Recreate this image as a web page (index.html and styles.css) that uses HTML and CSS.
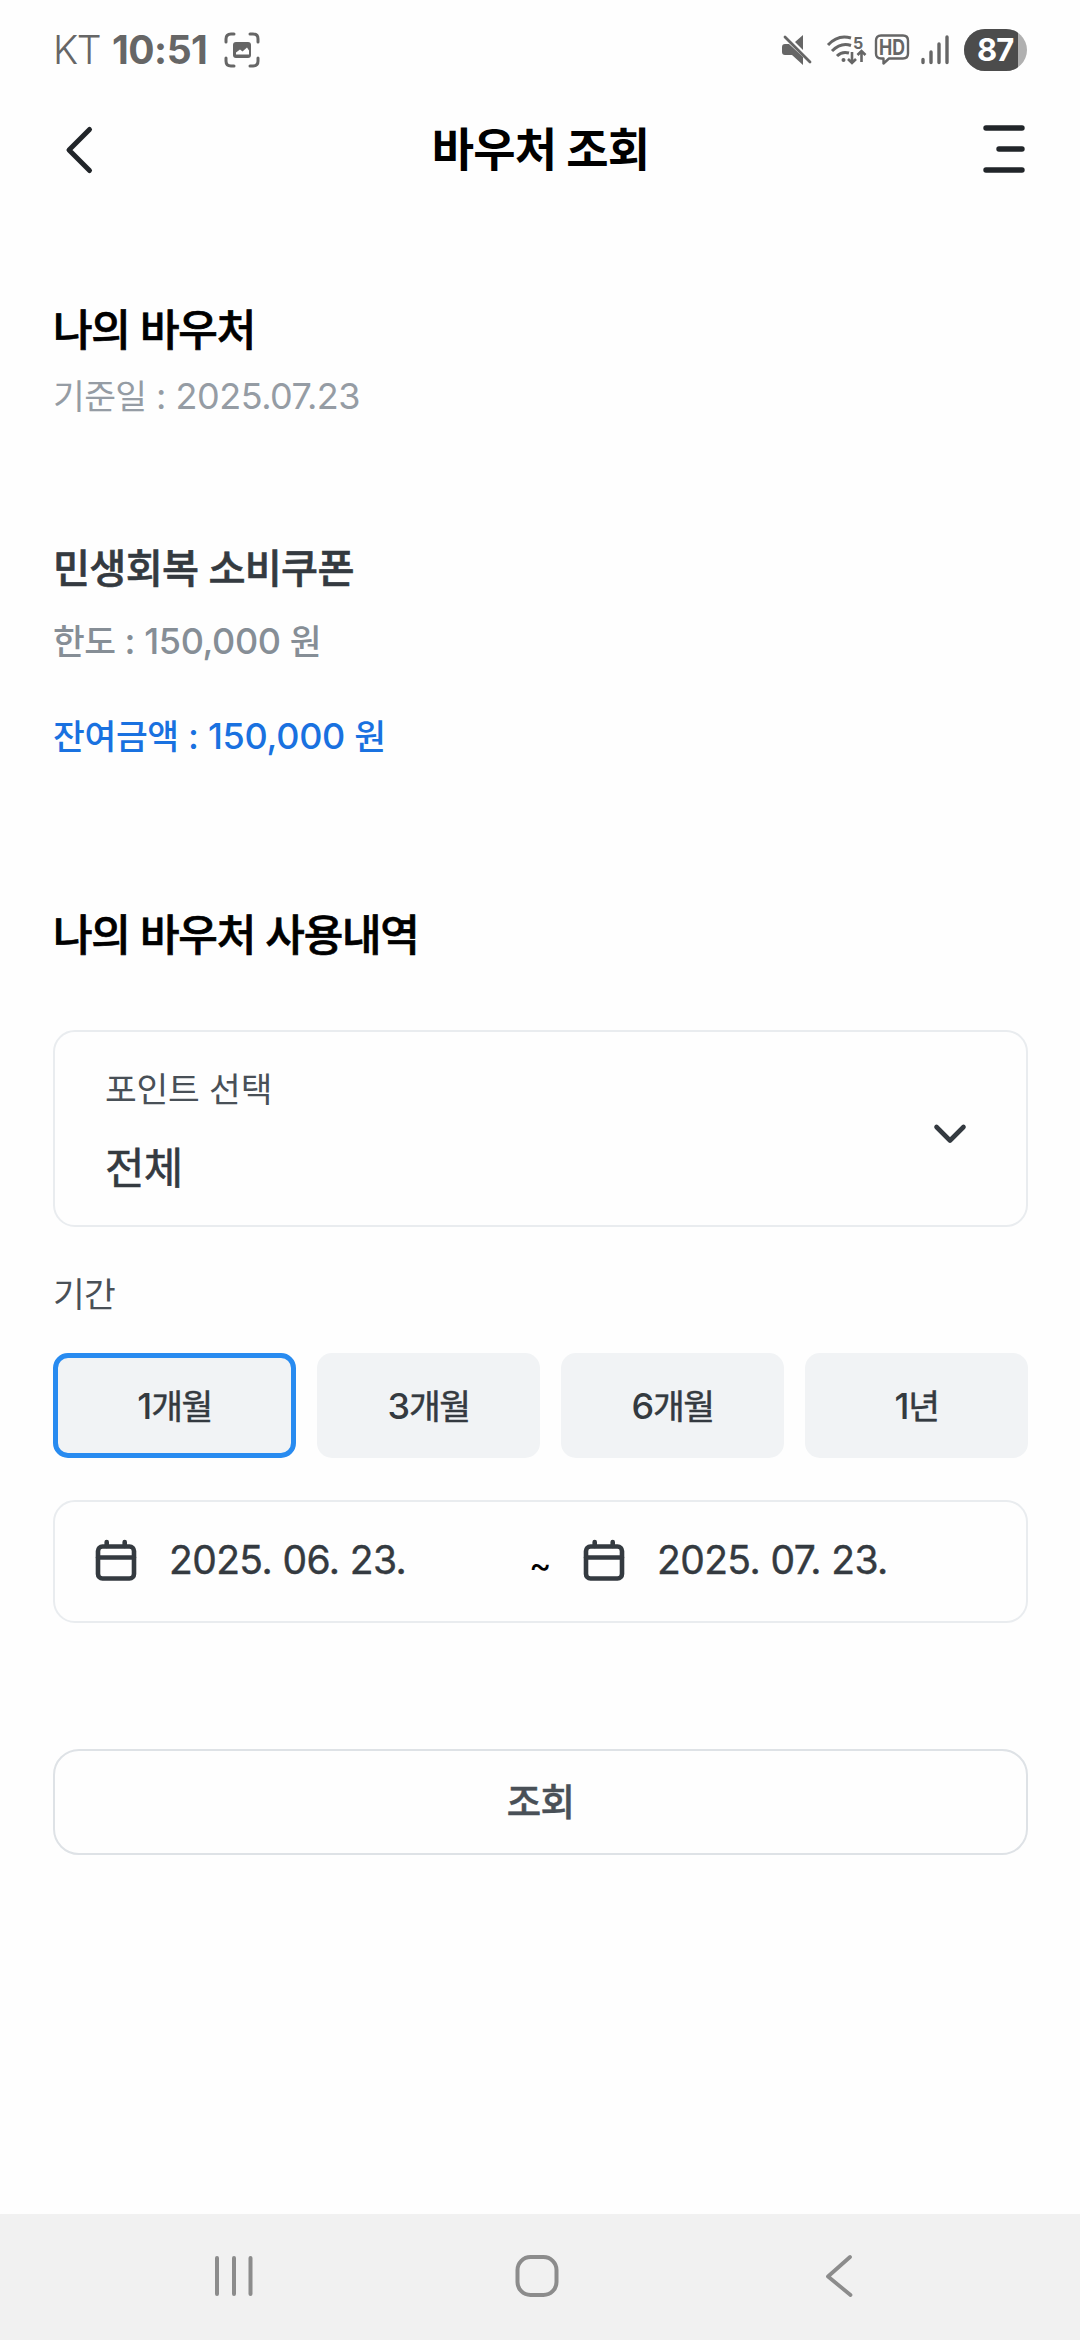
FILE: index.html
```html
<!DOCTYPE html>
<html lang="ko">
<head>
<meta charset="utf-8">
<title>바우처 조회</title>
<link rel="stylesheet" href="styles.css">
</head>
<body>
<div class="status">
  <span class="carrier">KT</span>
  <span class="clock">10:51</span>
  <svg class="capture" width="36" height="36" viewBox="0 0 36 36" fill="none" stroke="#666" stroke-width="3" stroke-linecap="round"><path d="M2 10V7q0-5 5-5h3M26 2h3q5 0 5 5v3M34 26v3q0 5-5 5h-3M10 34H7q-5 0-5-5v-3"/><rect x="9" y="10" width="18" height="16" rx="3" fill="#666" stroke="none"/><path d="M12 22.500v-2l4-3 2.500 2 4.500-4 2 3v4z" fill="#fff" stroke="none"/></svg>
  <div class="status-icons">
    <svg class="mute" width="30" height="32" viewBox="0 0 30 32"><path fill="#666" d="M0 13q0-3 3-3h4l14 13v8L10 21H3q-3 0-3-3zM21 1v15l-8-8z"/><path d="M3 3l25 25" stroke="#666" stroke-width="2.800" stroke-linecap="round"/></svg>
    <svg class="wifi" width="40" height="32" viewBox="0 0 40 32" fill="none" stroke="#666" stroke-width="3"><path d="M1 11Q11 0 24 4M5 17Q14 8 24 11.500M10 22q5-5 12-3"/><circle cx="16.500" cy="26" r="2" fill="#666" stroke="none"/><path d="M25 18v11m-4-4 4 4 4-4M34.500 28V17m-4 4 4-4 4 4" stroke-width="2.600"/><text x="26" y="15" class="wifi-gen">5</text></svg>
    <svg class="hd" width="36" height="32" viewBox="0 0 36 32"><path d="M7 1.500h22q5 0 5 5v13q0 5-5 5H15l-5.500 5V24.500H7q-5 0-5-5v-13q0-5 5-5z" fill="none" stroke="#666" stroke-width="2.400" stroke-linejoin="round"/><text x="5" y="20.500" class="hd-label" textLength="26" lengthAdjust="spacingAndGlyphs">HD</text></svg>
    <svg class="signal" width="28" height="30" viewBox="0 0 28 30" stroke="#666" stroke-width="3.400" stroke-linecap="round"><path d="M2 24.500v3M10 17v10.500M18 9v18.500M26 2v25.500"/></svg>
    <div class="battery"><span class="battery-level">87</span></div>
  </div>
</div>

<header class="appbar">
  <svg width="28" height="50" viewBox="0 0 28 50" fill="none" stroke="#212529" stroke-width="5" stroke-linecap="round" stroke-linejoin="round"><path d="M25.500 4.500 5 25l20.500 20.500"/></svg>
  <h1 class="ko">바우처 조회</h1>
  <svg width="44" height="50" viewBox="0 0 44 50" stroke="#212529" stroke-width="5.400" stroke-linecap="round"><path d="M4 3h36M17 24h23M4 45h36"/></svg>
</header>

<main class="content">
  <section class="summary">
    <h2 class="ko">나의 바우처</h2>
    <p class="asof"><span class="ko">기준일</span> : 2025.07.23</p>
  </section>
  <section class="voucher">
    <h3 class="ko">민생회복 소비쿠폰</h3>
    <p class="limit"><span class="ko">한도</span> : 150,000 <span class="ko">원</span></p>
    <p class="balance"><span class="ko">잔여금액</span> : 150,000 <span class="ko">원</span></p>
  </section>
  <section class="history">
    <h2 class="ko">나의 바우처 사용내역</h2>
    <div class="select">
      <div>
        <p class="select-label ko">포인트 선택</p>
        <p class="select-value ko">전체</p>
      </div>
      <svg width="34" height="22" viewBox="0 0 34 22" fill="none" stroke="#343a40" stroke-width="4.600" stroke-linecap="round" stroke-linejoin="round"><path d="M3.500 4 17 17.500 30.500 4"/></svg>
    </div>
    <p class="field-label ko">기간</p>
    <div class="periods">
      <button class="period selected">1<span class="ko">개월</span></button>
      <button class="period">3<span class="ko">개월</span></button>
      <button class="period">6<span class="ko">개월</span></button>
      <button class="period">1<span class="ko">년</span></button>
    </div>
    <div class="range">
      <div class="date date-from">
        <svg width="42" height="42" viewBox="0 0 42 42" fill="none" stroke="#343a40" stroke-width="4.600" stroke-linecap="round"><rect x="3" y="7.500" width="36" height="32" rx="4.500"/><path d="M3 18.500h36M11.700 3v4M29.700 3v4"/></svg>
        <span>2025. 06. 23.</span>
      </div>
      <span class="tilde">~</span>
      <div class="date">
        <svg width="42" height="42" viewBox="0 0 42 42" fill="none" stroke="#343a40" stroke-width="4.600" stroke-linecap="round"><rect x="3" y="7.500" width="36" height="32" rx="4.500"/><path d="M3 18.500h36M11.700 3v4M29.700 3v4"/></svg>
        <span>2025. 07. 23.</span>
      </div>
    </div>
    <button class="submit"><span class="ko">조회</span></button>
  </section>
</main>

<nav class="navbar">
  <svg width="44" height="44" viewBox="0 0 44 44" stroke="#8c8c8c" stroke-width="4" stroke-linecap="round"><path d="M5 4v36M22 4v36M38.500 4v36"/></svg>
  <svg width="44" height="44" viewBox="0 0 44 44" fill="none" stroke="#8c8c8c" stroke-width="4"><rect x="2.500" y="3" width="39" height="38" rx="13"/></svg>
  <svg width="44" height="44" viewBox="0 0 44 44" fill="none" stroke="#8c8c8c" stroke-width="3.800" stroke-linecap="round" stroke-linejoin="round"><path d="M33 3 11 22.500l22.500 18.500"/></svg>
</nav>
</body>
</html>
```
FILE: styles.css
```css
* { box-sizing: border-box; margin: 0; padding: 0; }
body {
  width: 1080px;
  height: 2340px;
  display: flex;
  flex-direction: column;
  background: #fefefe;
  color: #343a40;
  font-family: "Inter", "Noto Sans CJK KR", sans-serif;
  font-size: 36px;
  line-height: 60px;
  overflow: hidden;
}
svg { display: block; flex: none; overflow: visible; }
button { font: inherit; color: inherit; border: 0; }
p { height: 60px; }
.ko { letter-spacing: -0.018em; }
span.ko { font-size: 0.96em; line-height: 1; }

.status {
  height: 100px;
  padding: 0 53px;
  display: flex;
  align-items: center;
  color: #666;
  font-size: 39px;
}
.carrier { width: 59px; font-weight: 300; letter-spacing: -1.5px; }
.clock { width: 112px; font-weight: 700; letter-spacing: -0.5px; }
.status-icons { margin-left: auto; display: flex; align-items: center; }
.wifi { margin-left: 15px; }
.wifi-gen { font-size: 16px; font-weight: 700; fill: #666; stroke: none; }
.hd { margin-left: 7px; }
.hd-label { font-size: 21px; font-weight: 700; fill: #666; }
.signal { margin-left: 11px; }
.battery {
  width: 63px;
  height: 42px;
  margin-left: 15px;
  border-radius: 21px;
  overflow: hidden;
  background: #b0b0b0;
}
.battery-level {
  display: block;
  width: 54px;
  padding-left: 13px;
  background: #4c4c4c;
  color: #fff;
  font-size: 31px;
  font-weight: 700;
  line-height: 42px;
  letter-spacing: -1px;
}

.appbar {
  height: 100px;
  padding: 0 54px 0 64px;
  display: flex;
  align-items: center;
  justify-content: space-between;
  color: #000;
}
.appbar h1 { font-size: 46px; font-weight: 700; margin-left: 7px; padding-bottom: 2px; }

.content { flex: 1; padding: 100px 52px 0 53px; }
h2 { font-size: 43px; font-weight: 500; color: #000; -webkit-text-stroke: 0.7px currentColor; }
h2.ko { letter-spacing: -0.028em; }
.asof { margin-top: 6px; color: #959ca4; letter-spacing: -0.5px; }
.voucher { margin-top: 113px; }
h3 { font-size: 40.3px; font-weight: 500; -webkit-text-stroke: 0.6px currentColor; }
.limit { margin-top: 12px; color: #868e96; font-weight: 500; letter-spacing: -0.4px; }
.balance { margin-top: 35px; color: #1971e0; font-weight: 500; letter-spacing: -0.3px; }
.balance .ko { letter-spacing: -0.01em; }
.history { margin-top: 139px; }
.select {
  height: 197px;
  margin-top: 65px;
  padding: 0 59px 0 50px;
  display: flex;
  align-items: center;
  justify-content: space-between;
  border: 2px solid #e9ecef;
  border-radius: 22px;
}
.select-label { font-size: 34.5px; color: #495057; }
.select-label.ko { letter-spacing: -0.006em; }
.select-value { margin-top: 18px; font-size: 43px; -webkit-text-stroke: 0.6px currentColor; }
.select svg { margin-top: 11px; }
.field-label { margin-top: 38px; font-size: 34.5px; color: #495057; }
.periods { margin-top: 28px; display: flex; gap: 21px; }
.period {
  flex: 1;
  height: 105px;
  border-radius: 15px;
  background: #f1f3f5;
  font-weight: 500;
  letter-spacing: -1px;
}
.period .ko { letter-spacing: -0.045em; font-weight: 400; -webkit-text-stroke: 0.5px currentColor; }
.period.selected { flex: 0 0 243px; border: 5px solid #288bf0; }
.range {
  height: 123px;
  margin-top: 42px;
  padding: 0 40px 3px;
  display: flex;
  align-items: center;
  border: 2px solid #e9ecef;
  border-radius: 22px;
  font-size: 39px;
  letter-spacing: -0.6px;
}
.date { display: flex; align-items: center; gap: 32px; -webkit-text-stroke: 0.4px currentColor; }
.date-from { width: 434px; }
.tilde { width: 54px; padding-top: 10px; font-size: 34px; color: #000; }
.submit {
  width: 100%;
  height: 106px;
  margin-top: 126px;
  border: 2px solid #dee2e6;
  border-radius: 26px;
  background: none;
  color: #495057;
  font-size: 39px;
  font-weight: 500;
  -webkit-text-stroke: 0.5px currentColor;
}

.navbar {
  height: 126px;
  padding: 0 219px 2px 212px;
  display: flex;
  align-items: center;
  justify-content: space-between;
  background: #f1f1f1;
}
```
